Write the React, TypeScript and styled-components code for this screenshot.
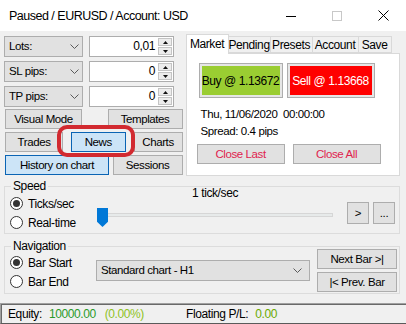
import styled, { createGlobalStyle } from "styled-components";

const GlobalStyle = createGlobalStyle`
  html, body {
    margin: 0;
    padding: 0;
    background: #ffffff;
  }
  body {
    font-family: "Liberation Sans", Arial, sans-serif;
    font-size: 11.5px;
    letter-spacing: -0.4px;
    color: #000;
  }
  * {
    box-sizing: border-box;
  }
`;

const Window = styled.div`
  width: 406px;
  height: 324px;
  display: flex;
  flex-direction: column;
  background: #f0f0f0;
  overflow: hidden;
`;

const TitleBar = styled.div`
  flex: 0 0 31px;
  display: flex;
  align-items: center;
  background: #ffffff;
  padding-left: 9px;
`;

const Title = styled.div`
  flex: 1;
  font-size: 12.5px;
  letter-spacing: -0.5px;
  line-height: 14px;
`;

const Caption = styled.div`
  display: flex;
  align-self: stretch;
`;

const CaptionButton = styled.div`
  width: 46px;
  display: flex;
  align-items: center;
  justify-content: center;
`;

const Body = styled.div`
  flex: 1;
  display: flex;
  flex-direction: column;
  padding: 3px 6px 0 4px;
`;

const TopSection = styled.div`
  display: flex;
  gap: 3px;
`;

const LeftColumn = styled.div`
  width: 179px;
  padding-top: 2px;
  display: flex;
  flex-direction: column;
`;

const FieldRow = styled.div`
  display: flex;
  gap: 6px;
  height: 21px;
  & + & {
    margin-top: 4px;
  }
`;

const ComboBox = styled.div<{ $w: number; $arrowPad: number }>`
  width: ${(p) => p.$w}px;
  height: 21px;
  border: 1px solid #adadad;
  background: #e1e1e1;
  display: flex;
  align-items: center;
  justify-content: space-between;
  padding: 0 ${(p) => p.$arrowPad}px 0 4px;
  line-height: 13px;
`;

const NumberBox = styled.div`
  width: 85px;
  height: 21px;
  border: 1px solid #adadad;
  background: #ffffff;
  display: flex;
  padding: 1px;
`;

const NumberValue = styled.div`
  flex: 1;
  text-align: right;
  padding-right: 3px;
  line-height: 17px;
  font-size: 12px;
`;

const Spinner = styled.div`
  width: 14px;
  display: flex;
  flex-direction: column;
  gap: 1px;
`;

const SpinHalf = styled.div`
  flex: 1;
  border: 1px solid #c4c4c4;
  background: #ececec;
  display: flex;
  align-items: center;
  justify-content: center;
`;

const ButtonsBlock = styled.div`
  position: relative;
  margin-top: 2px;
  display: flex;
  flex-direction: column;
  gap: 3px;
`;

const ButtonRow = styled.div`
  display: flex;
  justify-content: space-between;
  height: 20px;
  padding-left: 1px;
`;

const WinButton = styled.button<{ $w: number; $active?: boolean; $color?: string }>`
  width: ${(p) => p.$w}px;
  height: 100%;
  margin: 0;
  padding: 0;
  font: inherit;
  letter-spacing: inherit;
  color: ${(p) => p.$color ?? "#000"};
  background: ${(p) => (p.$active ? "#cce4f7" : "#e1e1e1")};
  border: 1px solid ${(p) => (p.$active ? "#0a64b4" : "#adadad")};
  display: flex;
  align-items: center;
  justify-content: center;
  white-space: nowrap;
`;

const Annotation = styled.div`
  position: absolute;
  left: 53px;
  top: 16px;
  width: 78px;
  height: 32px;
  border: 4px solid #d22a30;
  border-radius: 10px;
  pointer-events: none;
`;

const TabControl = styled.div`
  width: 215px;
  display: flex;
  flex-direction: column;
`;

const TabStrip = styled.div`
  height: 19px;
  display: flex;
  align-items: flex-end;
  position: relative;
  z-index: 1;
`;

const Tab = styled.div<{ $w: number; $selected?: boolean }>`
  width: ${(p) => p.$w}px;
  height: ${(p) => (p.$selected ? 20 : 17)}px;
  margin-bottom: ${(p) => (p.$selected ? -1 : 0)}px;
  background: ${(p) => (p.$selected ? "#ffffff" : "#f0f0f0")};
  border: 1px solid #d9d9d9;
  border-bottom: ${(p) => (p.$selected ? "none" : "1px solid #d9d9d9")};
  display: flex;
  align-items: center;
  justify-content: center;
  font-size: 12px;
  padding-bottom: ${(p) => (p.$selected ? 2 : 0)}px;
  & + & {
    margin-left: -1px;
  }
`;

const TabPanel = styled.div`
  height: 123px;
  border: 1px solid #d9d9d9;
  background: #ffffff;
  padding: 9px 0 0 0;
`;

const TradeRow = styled.div`
  display: flex;
  gap: 4px;
  height: 35px;
  margin-left: 12px;
`;

const TradeButton = styled.div<{ $w: number; $fill: string; $text: string }>`
  width: ${(p) => p.$w}px;
  border: 1px solid #adadad;
  background: ${(p) => p.$fill};
  box-shadow: inset 0 0 0 2px #e6e6e6;
  color: ${(p) => p.$text};
  display: flex;
  align-items: center;
  justify-content: center;
  font-size: 12px;
`;

const InfoLine = styled.div<{ $mt?: number }>`
  padding-left: 14px;
  line-height: 17px;
  margin-top: ${(p) => p.$mt ?? 0}px;
  white-space: pre;
`;

const CloseRow = styled.div`
  display: flex;
  gap: 8px;
  height: 20px;
  margin: 4px 0 0 10px;
`;

const GroupBox = styled.fieldset<{ $mt: number; $pr: number }>`
  margin: ${(p) => p.$mt}px 0 0 0;
  padding: 0 ${(p) => p.$pr}px 1px 5px;
  border: 1px solid #dcdcdc;
  min-width: 0;
`;

const GroupLabel = styled.legend`
  padding: 0 2px;
  margin-left: 1px;
  line-height: 12px;
  font-size: 12px;
`;

const GroupContent = styled.div`
  display: flex;
  align-items: flex-start;
`;

const RadioCol = styled.div<{ $w: number; $pt: number }>`
  width: ${(p) => p.$w}px;
  padding-top: ${(p) => p.$pt}px;
  display: flex;
  flex-direction: column;
`;

const RadioRow = styled.div`
  height: 19px;
  display: flex;
  align-items: center;
  gap: 5px;
  font-size: 12px;
`;

const RadioCircle = styled.span<{ $checked?: boolean }>`
  width: 13px;
  height: 13px;
  border: 1px solid #333333;
  border-radius: 50%;
  background: #ffffff;
  display: flex;
  align-items: center;
  justify-content: center;
  &::after {
    content: "";
    width: 7px;
    height: 7px;
    border-radius: 50%;
    background: ${(p) => (p.$checked ? "#333333" : "transparent")};
  }
`;

const SliderCol = styled.div`
  width: 236px;
  margin-top: -5px;
  display: flex;
  flex-direction: column;
`;

const SliderLabel = styled.div`
  line-height: 13px;
  text-align: center;
  font-size: 12px;
`;

const Slider = styled.div`
  position: relative;
  height: 19px;
  margin-top: 8px;
`;

const SliderTrack = styled.div`
  position: absolute;
  left: 0;
  right: 0;
  top: 5px;
  height: 4px;
  border: 1px solid #d6d6d6;
  background: #e7eaea;
`;

const SliderThumb = styled.div`
  position: absolute;
  left: 0;
  top: 0;
  width: 11px;
  height: 19px;
  background: #0078d7;
  clip-path: polygon(0 0, 100% 0, 100% 72%, 50% 100%, 0 72%);
`;

const SmallButtons = styled.div`
  display: flex;
  gap: 4px;
  height: 22px;
  margin: 10px 0 0 14px;
`;

const NavButtons = styled.div`
  display: flex;
  flex-direction: column;
  gap: 3px;
  margin: -3px 0 0 7px;
  & > * {
    height: 20px;
  }
`;

const StatusBar = styled.div`
  flex: 0 0 21px;
  display: flex;
  align-items: center;
  border-top: 1px solid #a0a0a0;
  border-left: 1px solid #a0a0a0;
  border-bottom: 1px solid #5a5a5a;
  box-shadow: inset 1px 1px 0 #696969;
  padding-left: 7px;
  font-size: 12px;
`;

const StatusGroup = styled.div<{ $w?: number }>`
  width: ${(p) => (p.$w ? `${p.$w}px` : "auto")};
  display: flex;
  white-space: pre;
`;

const StatusValue = styled.span<{ $color: string; $ml: number }>`
  color: ${(p) => p.$color};
  margin-left: ${(p) => p.$ml}px;
`;

const Chevron = () => (
  <svg width="9" height="6" viewBox="0 0 9 6">
    <polyline points="0.5,0.5 4.5,4.5 8.5,0.5" fill="none" stroke="#5a5a5a" strokeWidth="1" />
  </svg>
);

const Arrow = ({ up }: { up?: boolean }) => (
  <svg width="5" height="3" viewBox="0 0 5 3">
    <polygon points={up ? "2.5,0 5,3 0,3" : "0,0 5,0 2.5,3"} fill="#111" />
  </svg>
);

const Field = ({ label, value }: { label: string; value: string }) => (
  <FieldRow>
    <ComboBox $w={79} $arrowPad={3}>
      <span>{label}</span>
      <Chevron />
    </ComboBox>
    <NumberBox>
      <NumberValue>{value}</NumberValue>
      <Spinner>
        <SpinHalf>
          <Arrow up />
        </SpinHalf>
        <SpinHalf>
          <Arrow />
        </SpinHalf>
      </Spinner>
    </NumberBox>
  </FieldRow>
);

const tabs = [
  { name: "Market", w: 43 },
  { name: "Pending", w: 43 },
  { name: "Presets", w: 43 },
  { name: "Account", w: 47 },
  { name: "Save", w: 34 },
];

export default function App() {
  return (
    <>
      <GlobalStyle />
      <Window>
        <TitleBar>
          <Title>Paused / EURUSD / Account: USD</Title>
          <Caption>
            <CaptionButton>
              <svg width="10" height="10" viewBox="0 0 10 10">
                <line x1="0" y1="5.5" x2="10" y2="5.5" stroke="#000" strokeWidth="1" />
              </svg>
            </CaptionButton>
            <CaptionButton>
              <svg width="10" height="10" viewBox="0 0 10 10">
                <rect x="0.5" y="0.5" width="9" height="9" fill="none" stroke="#c8c8c8" strokeWidth="1" />
              </svg>
            </CaptionButton>
            <CaptionButton>
              <svg width="11" height="11" viewBox="0 0 11 11">
                <path d="M0.5 0.5 L10.5 10.5 M10.5 0.5 L0.5 10.5" stroke="#000" strokeWidth="1" />
              </svg>
            </CaptionButton>
          </Caption>
        </TitleBar>

        <Body>
          <TopSection>
            <LeftColumn>
              <Field label="Lots:" value="0,01" />
              <Field label="SL pips:" value="0" />
              <Field label="TP pips:" value="0" />
              <ButtonsBlock>
                <ButtonRow>
                  <WinButton $w={77}>Visual Mode</WinButton>
                  <WinButton $w={75}>Templates</WinButton>
                </ButtonRow>
                <ButtonRow>
                  <WinButton $w={58}>Trades</WinButton>
                  <WinButton $w={55} $active>
                    News
                  </WinButton>
                  <WinButton $w={49}>Charts</WinButton>
                </ButtonRow>
                <ButtonRow>
                  <WinButton $w={104} $active>
                    History on chart
                  </WinButton>
                  <WinButton $w={70}>Sessions</WinButton>
                </ButtonRow>
                <Annotation />
              </ButtonsBlock>
            </LeftColumn>

            <TabControl>
              <TabStrip>
                {tabs.map((t, i) => (
                  <Tab key={t.name} $w={t.w} $selected={i === 0}>
                    {t.name}
                  </Tab>
                ))}
              </TabStrip>
              <TabPanel>
                <TradeRow>
                  <TradeButton $w={84} $fill="#9acd32" $text="#000">
                    Buy @ 1.13672
                  </TradeButton>
                  <TradeButton $w={88} $fill="#ff0000" $text="#fff">
                    Sell @ 1.13668
                  </TradeButton>
                </TradeRow>
                <InfoLine $mt={8}>Thu, 11/06/2020  00:00:00</InfoLine>
                <InfoLine>Spread: 0.4 pips</InfoLine>
                <CloseRow>
                  <WinButton $w={88} $color="#e0234e">
                    Close Last
                  </WinButton>
                  <WinButton $w={88} $color="#e0234e">
                    Close All
                  </WinButton>
                </CloseRow>
              </TabPanel>
            </TabControl>
          </TopSection>

          <GroupBox $mt={4} $pr={3}>
            <GroupLabel>Speed</GroupLabel>
            <GroupContent>
              <RadioCol $w={87} $pt={2}>
                <RadioRow>
                  <RadioCircle $checked />
                  Ticks/sec
                </RadioRow>
                <RadioRow>
                  <RadioCircle />
                  Real-time
                </RadioRow>
              </RadioCol>
              <SliderCol>
                <SliderLabel>1 tick/sec</SliderLabel>
                <Slider>
                  <SliderTrack />
                  <SliderThumb />
                </Slider>
              </SliderCol>
              <SmallButtons>
                <WinButton $w={22}>&gt;</WinButton>
                <WinButton $w={22}>...</WinButton>
              </SmallButtons>
            </GroupContent>
          </GroupBox>

          <GroupBox $mt={6} $pr={2}>
            <GroupLabel>Navigation</GroupLabel>
            <GroupContent>
              <RadioCol $w={86} $pt={1}>
                <RadioRow>
                  <RadioCircle $checked />
                  Bar Start
                </RadioRow>
                <RadioRow>
                  <RadioCircle />
                  Bar End
                </RadioRow>
              </RadioCol>
              <ComboBox $w={214} $arrowPad={7} style={{ marginTop: 8 }}>
                <span>Standard chart - H1</span>
                <Chevron />
              </ComboBox>
              <NavButtons>
                <WinButton $w={80}>Next Bar &gt;|</WinButton>
                <WinButton $w={80}>|&lt; Prev. Bar</WinButton>
              </NavButtons>
            </GroupContent>
          </GroupBox>
        </Body>

        <StatusBar>
          <StatusGroup $w={178}>
            Equity:
            <StatusValue $color="#2a9a2a" $ml={7}>
              10000.00
            </StatusValue>
            <StatusValue $color="#8fc21f" $ml={9}>
              (0.00%)
            </StatusValue>
          </StatusGroup>
          <StatusGroup>
            Floating P/L:
            <StatusValue $color="#6aaa00" $ml={7}>
              0.00
            </StatusValue>
          </StatusGroup>
        </StatusBar>
      </Window>
    </>
  );
}
